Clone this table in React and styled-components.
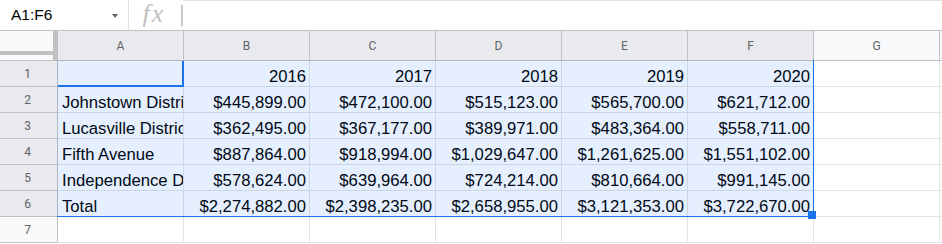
import React from "react"
import styled, { createGlobalStyle } from 'styled-components'

const GlobalStyle = createGlobalStyle`
  html, body {
    margin: 0;
    padding: 0;
    background: #fff;
    overflow: hidden;
  }
  body {
    font-family: 'Liberation Sans', Arial, sans-serif;
  }
`

const COL_W = 126
const ROW_H = 26

const columns = ['A', 'B', 'C', 'D', 'E', 'F', 'G']

const data = [
  ['', '2016', '2017', '2018', '2019', '2020'],
  ['Johnstown District', '$445,899.00', '$472,100.00', '$515,123.00', '$565,700.00', '$621,712.00'],
  ['Lucasville District', '$362,495.00', '$367,177.00', '$389,971.00', '$483,364.00', '$558,711.00'],
  ['Fifth Avenue', '$887,864.00', '$918,994.00', '$1,029,647.00', '$1,261,625.00', '$1,551,102.00'],
  ['Independence District', '$578,624.00', '$639,964.00', '$724,214.00', '$810,664.00', '$991,145.00'],
  ['Total', '$2,274,882.00', '$2,398,235.00', '$2,658,955.00', '$3,121,353.00', '$3,722,670.00'],
  ['', '', '', '', '', ''],
]

const Page = styled.div`
  width: 942px;
  height: 244px;
  overflow: hidden;
`

/* formula bar */
const FormulaBar = styled.div`
  display: flex;
  align-items: stretch;
  height: 30px;
  border-bottom: 1px solid #c0c0c0;
`
const NameBox = styled.div`
  display: flex;
  align-items: center;
  justify-content: space-between;
  width: 129px;
  padding: 0 10px 0 11px;
  box-sizing: border-box;
  border-right: 1px solid #e0e0e0;
  font-size: 15.5px;
  color: #000;
`
const Caret = styled.span`
  width: 0;
  height: 0;
  margin-top: 2px;
  border-left: 3.5px solid transparent;
  border-right: 3.5px solid transparent;
  border-top: 4px solid #666;
`
const FxLabel = styled.div`
  display: flex;
  align-items: center;
  justify-content: center;
  width: 52px;
  font-family: 'Liberation Serif', 'Times New Roman', serif;
  font-style: italic;
  font-size: 26px;
  line-height: 24px;
  letter-spacing: 2px;
  color: #c0c0c0;
  padding: 0 2px 3px 0;
  box-sizing: border-box;
`
const FxDivider = styled.div`
  align-self: center;
  width: 2px;
  height: 21px;
  background: #c9c9c9;
`
const FormulaInput = styled.div`
  flex: 1;
  border-top: 1px solid #e4e4e4;
`

/* grid */
const SheetWrap = styled.div`
  position: relative;
`
const Grid = styled.div`
  display: grid;
  grid-template-columns: 58px repeat(7, ${COL_W}px) 1fr;
  grid-template-rows: 30px repeat(7, ${ROW_H}px);
`
const Corner = styled.div`
  position: relative;
  background: #f8f9fa;
  border-right: 5px solid #c0c0c0;
  border-bottom: 1px solid #c0c0c0;
  &::after {
    content: '';
    position: absolute;
    left: 0;
    right: 0;
    bottom: 5px;
    height: 4px;
    background: #c0c0c0;
  }
`
const ColHeader = styled.div`
  display: flex;
  align-items: center;
  justify-content: center;
  padding-top: 1px;
  background: ${p => (p.$active ? '#e8eaed' : '#f8f9fa')};
  border-right: ${p => (p.$last ? 'none' : '1px solid #c0c0c0')};
  border-bottom: 1px solid #c0c0c0;
  font-family: Roboto, 'Liberation Sans', Arial, sans-serif;
  font-size: 12px;
  color: #5f6368;
`
const RowHeader = styled.div`
  display: flex;
  align-items: center;
  justify-content: center;
  padding-right: 2px;
  background: ${p => (p.$active ? '#e8eaed' : '#f8f9fa')};
  border-right: 1px solid #c0c0c0;
  border-bottom: 1px solid #c0c0c0;
  font-family: Roboto, 'Liberation Sans', Arial, sans-serif;
  font-size: 12px;
  color: #5f6368;
`
const Cell = styled.div`
  display: flex;
  align-items: flex-end;
  justify-content: ${p => (p.$num ? 'flex-end' : 'flex-start')};
  padding: ${p => (p.$num ? '0 3px 0 0' : '0 0 0 4px')};
  overflow: hidden;
  white-space: nowrap;
  border-right: ${p => (p.$last ? 'none' : '1px solid #e2e3e3')};
  border-bottom: 1px solid #e2e3e3;
  font-size: 16.67px;
  line-height: 19px;
  color: #000;
`

/* selection */
const Selection = styled.div`
  position: absolute;
  left: 57px;
  top: 29px;
  width: ${6 * COL_W + 1}px;
  height: ${6 * ROW_H + 1}px;
  box-sizing: border-box;
  background: rgba(14, 101, 235, 0.1);
  border-right: 1px solid #1a73e8;
  border-bottom: 1px solid #1a73e8;
  pointer-events: none;
`
const ActiveCell = styled.div`
  position: absolute;
  left: 58px;
  top: 30px;
  width: ${COL_W}px;
  height: ${ROW_H}px;
  box-sizing: border-box;
  border-right: 2px solid #1a73e8;
  border-bottom: 2px solid #1a73e8;
  pointer-events: none;
`
const FillHandle = styled.div`
  position: absolute;
  left: 808px;
  top: 180px;
  width: 8px;
  height: 8px;
  background: #1a73e8;
`

export default function App() {
  return (
    <Page>
      <GlobalStyle />
      <FormulaBar>
        <NameBox>
          A1:F6
          <Caret />
        </NameBox>
        <FxLabel>fx</FxLabel>
        <FxDivider />
        <FormulaInput />
      </FormulaBar>
      <SheetWrap>
        <Grid>
          <Corner />
          {columns.map(c => (
            <ColHeader key={c} $active={c !== 'G'}>{c}</ColHeader>
          ))}
          <ColHeader $last />
          {data.map((row, r) => (
            <React.Fragment key={r}>
              <RowHeader $active={r < 6}>{r + 1}</RowHeader>
              {row.map((v, c) => (
                <Cell key={c} $num={c > 0}>{v}</Cell>
              ))}
              <Cell />
              <Cell $last />
            </React.Fragment>
          ))}
        </Grid>
        <Selection />
        <ActiveCell />
        <FillHandle />
      </SheetWrap>
    </Page>
  )
}
